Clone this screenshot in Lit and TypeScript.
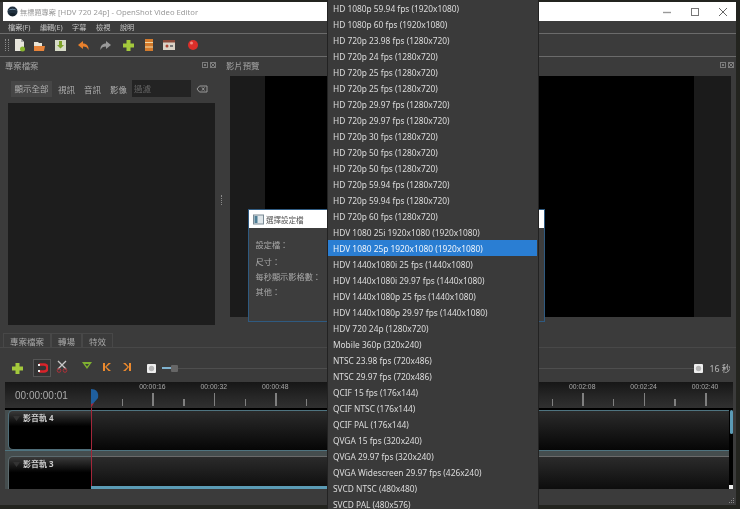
import { LitElement, html, css, svg } from 'lit';
import { customElement } from 'lit/decorators.js';

const profiles = [
  'HD 1080p 59.94 fps (1920x1080)', 'HD 1080p 60 fps (1920x1080)', 'HD 720p 23.98 fps (1280x720)',
  'HD 720p 24 fps (1280x720)', 'HD 720p 25 fps (1280x720)', 'HD 720p 25 fps (1280x720)',
  'HD 720p 29.97 fps (1280x720)', 'HD 720p 29.97 fps (1280x720)', 'HD 720p 30 fps (1280x720)',
  'HD 720p 50 fps (1280x720)', 'HD 720p 50 fps (1280x720)', 'HD 720p 59.94 fps (1280x720)',
  'HD 720p 59.94 fps (1280x720)', 'HD 720p 60 fps (1280x720)', 'HDV 1080 25i 1920x1080 (1920x1080)',
  'HDV 1080 25p 1920x1080 (1920x1080)', 'HDV 1440x1080i 25 fps (1440x1080)', 'HDV 1440x1080i 29.97 fps (1440x1080)',
  'HDV 1440x1080p 25 fps (1440x1080)', 'HDV 1440x1080p 29.97 fps (1440x1080)', 'HDV 720 24p (1280x720)',
  'Mobile 360p (320x240)', 'NTSC 23.98 fps (720x486)', 'NTSC 29.97 fps (720x486)', 'QCIF 15 fps (176x144)',
  'QCIF NTSC (176x144)', 'QCIF PAL (176x144)', 'QVGA 15 fps (320x240)', 'QVGA 29.97 fps (320x240)',
  'QVGA Widescreen 29.97 fps (426x240)', 'SVCD NTSC (480x480)', 'SVCD PAL (480x576)',
];
const SELECTED = 15;

const ico = (w: number, h: number, body: unknown) =>
  html`<svg width=${w} height=${h} viewBox="0 0 ${w} ${h}">${body}</svg>`;

const plus = ico(13, 13, svg`<path d="M4.500 1h4v3.500H12v4H8.500V12h-4V8.500H1v-4h3.500z" fill="#a4c93c"/>`);
const dockBtns = ico(16, 8, svg`<g fill="none" stroke="#7c7c7c" stroke-width="1"><rect x="1.500" y="1.500" width="5" height="5"/><path d="M3 3l2 2M5 3L3 5"/><rect x="9.500" y="1.500" width="5" height="5"/><path d="M10 2l4 4M14 2l-4 4"/></g>`);

const tick = (i: number) => {
  const left = 91 - 5 + i * 30.7;
  return html`<i class="tick ${i % 2 === 0 ? 'major' : ''}" style="left:${left}px"></i>`;
};
const stamp = (n: number) => {
  const s = n * 16;
  const mm = String(Math.floor(s / 60)).padStart(2, '0');
  const ss = String(s % 60).padStart(2, '0');
  return html`<span class="stamp" style="left:${91 - 5 + n * 61.4 - 20}px">00:${mm}:${ss}</span>`;
};

@customElement('app-root')
export class AppRoot extends LitElement {
  static styles = css`
    :host {
      display: block;
      width: 740px;
      height: 509px;
      position: relative;
      overflow: hidden;
      background: #23241f;
      font-family: "Noto Sans", "Noto Sans CJK TC", sans-serif;
      font-size: 9px;
      color: #bdbdbd;
    }
    .window, .dialog, .dropdown { filter: blur(0.25px); }
    .window {
      margin-top: 2px;
      width: 736px;
      height: 503px;
      background: #3b3b3b;
      display: flex;
      flex-direction: column;
    }
    .title {
      height: 19px;
      margin-left: 3px;
      background: #fff;
      display: flex;
      align-items: center;
      padding-left: 4px;
      color: #9a9a9a;
      font-size: 7.7px;
      gap: 2px;
      flex: none;
    }
    .title .caption { flex: 1; }
    .title .cjk { font-size: 7.2px; }
    .winbtns { display: flex; gap: 18px; padding-right: 8px; align-items: center; }
    .menubar {
      height: 12px;
      flex: none;
      display: flex;
      gap: 9.5px;
      padding-left: 8px;
      align-items: center;
      border-bottom: 1px solid #6b6b6b;
      font-size: 7.2px;
      line-height: 12px;
      color: #c4c4c4;
    }
    .toolbar {
      height: 22px;
      flex: none;
      display: flex;
      align-items: center;
      padding-left: 5px;
      border-bottom: 1px solid #6b6b6b;
    }
    .grip { width: 2px; height: 12px; border-left: 1px dotted #8a8a8a; border-right: 1px dotted #8a8a8a; }
    .toolbar svg { display: block; }
    .tb { width: 20.6px; display: flex; justify-content: center; flex: none; }
    .tb.gap3 { margin-left: 3px; }
    .docks { height: 272px; flex: none; display: flex; }
    .dock-left { width: 218px; flex: none; display: flex; flex-direction: column; padding-left: 6px; box-sizing: border-box; }
    .dock-head {
      height: 14px;
      margin-top: 1px;
      display: flex;
      align-items: center;
      justify-content: space-between;
      color: #a4a4a4;
      font-size: 8.4px;
      padding-right: 1px;
    }
    .dock-left .dock-head { margin-left: -1px; }
    .filter { display: flex; align-items: center; height: 17px; margin-top: 8px; padding-left: 5px; color: #b0b0b0; font-size: 8.5px; }
    .filter .all { width: 41px; height: 16px; line-height: 16px; text-align: center; background: #464646; margin-right: 6px; }
    .filter span { width: 17px; margin-right: 9px; flex: none; }
    .filter .input { width: 59px; height: 17px; line-height: 17px; background: #232323; color: #666; padding-left: 2px; box-sizing: border-box; margin: 0 5px 0 -4px; }
    .list { flex: 1; margin: 6px 3px 4px 2px; background: #1d1d1d; }
    .splitter { width: 8px; flex: none; display: flex; align-items: center; justify-content: center; }
    .splitter i { height: 10px; width: 1px; border-left: 1px dotted #8a8a8a; margin-top: 14px; }
    .dock-right { flex: 1; display: flex; flex-direction: column; min-width: 0; }
    .preview { margin: 4px 5px 0 4px; height: 241px; background: #1b1b1b; display: flex; justify-content: center; }
    .preview div { width: 429px; background: #000; margin-right: 2px; }
    .tabs { flex: none; margin-top: 4px; height: 14px; display: flex; padding-left: 3px; border-bottom: 1px solid #484848; color: #a8a8a8; }
    .tabs span { padding: 0 6px; line-height: 15px; border: 1px solid #484848; border-bottom: 0; height: 14px; font-size: 8.5px; }
    .tl-tools { flex: none; height: 26px; margin-top: 7px; display: flex; align-items: center; padding-left: 11px; }
    .tl-tools > * { flex: none; }
    .magnet { width: 18px; height: 18px; box-sizing: border-box; border: 1px solid #555; background: #333; display: flex; align-items: center; justify-content: center; margin: 0 5px 0 9px; }
    .t-cut { margin-right: 13px; }
    .t-down { margin-right: 9px; margin-top: -4px; }
    .t-prev { margin-right: 10px; }
    .t-next { margin-right: 15px; }
    .slider { display: flex; align-items: center; margin-left: 6px; width: 532px; }
    .slider b { display: block; width: 9px; height: 2px; background: #7fb2cf; }
    .slider i { display: block; width: 7px; height: 7px; background: #666; border-radius: 1px; }
    .slider u { display: block; flex: 1; height: 1px; background: #4e4e4e; }
    .zbox { width: 9px; height: 9px; background: radial-gradient(#b5b5b5 35%, #eee 50%); border-radius: 1px; display: block; }
    .secs { margin-left: 6.500px; font-size: 8.800px; color: #b8b8b8; }
    .timeline { flex: none; margin-left: 5px; margin-top: 1px; width: 728px; height: 107px; background: #000; position: relative; overflow: hidden; }
    .ruler { height: 26px; position: relative; background: linear-gradient(#161616, #262626 55%, #303030); }
    .clock { position: absolute; left: 10px; top: 8px; font: 10px "Liberation Sans", sans-serif; color: #aaa; }
    .stamp { position: absolute; top: 0; width: 40px; text-align: center; font: 6.8px "Liberation Sans", sans-serif; line-height: 9px; color: #aaa; }
    .tick { position: absolute; bottom: 2px; width: 1.5px; height: 7px; background: #808080; }
    .tick.major { height: 13px; }
    .tracks { margin: 2px 4px 0 0; background: #454d4e; }
    .track { height: 40px; display: flex; }
    .gap { height: 6px; box-sizing: border-box; border-top: 1px solid #4f7480; }
    .head { width: 83px; margin-left: 3px; flex: none; box-sizing: border-box; border: 1px solid #4f6d78; border-right: 0; border-radius: 5px 0 0 5px; background: linear-gradient(#3a3a3a, #000 40%); color: #ccc; padding-left: 4px; font-size: 8px; font-weight: 700; line-height: 14px; display: flex; gap: 3px; align-items: flex-start; }
    .head svg { margin-top: 5px; }
    .lane { flex: 1; border-top: 1px solid #4f7480; background: linear-gradient(#2b2b2b, #060606); }
    .second .lane { border-top-color: #6a6a6a; }
    .second .head { border-bottom: 0; border-radius: 5px 0 0 0; border-color: #5c6a6e; }
    .vthumb { position: absolute; right: 0; top: 28px; width: 3px; height: 24px; background: #5b9bb5; border-radius: 2px; }
    .corner { position: absolute; right: 0; bottom: 0; width: 4px; height: 4px; background: #eee; }
    .hthumb { position: absolute; left: 86px; bottom: 0; width: 320px; height: 3px; background: #5b9bb5; }
    .playline { position: absolute; left: 86px; top: 26px; bottom: 0; width: 1px; background: #a3273a; }
    .playhead { position: absolute; left: 86px; top: 7px; display: block; }
    .status { flex: 1; position: relative; }
    .resize { position: absolute; right: 1px; bottom: 1px; display: block; }

    .dialog {
      position: absolute;
      left: 248px;
      top: 209px;
      width: 297px;
      height: 113px;
      box-sizing: border-box;
      border: 1px solid #2f5a80;
      background: #3d3d3d;
    }
    .dlg-title { height: 18px; background: #fff; display: flex; align-items: center; gap: 2px; padding-left: 4px; color: #555; font-size: 7.5px; }
    .dlg-body { display: grid; grid-template-rows: 16px 17px 14px 15px; padding: 8px 0 0 6.500px; color: #aaa; font-size: 8.2px; align-items: center; }

    .dropdown {
      position: absolute;
      left: 328px;
      top: 0;
      width: 210px;
      height: 509px;
      overflow: hidden;
      background: #3a3a3a;
      box-shadow: 1px 0 0 #222, -1px 0 0 #222;
    }
    .row { height: 16px; line-height: 18px; padding-left: 5px; font-size: 8.350px; color: #dcdcdc; white-space: nowrap; }
    .row.sel { background: #2a7ed3; color: #eef4fb; margin-right: 1px; }
  `;

  render() {
    const ticks = Array.from({ length: 21 }, (_, i) => i + 1);
    // stamps 4 to 7 sit behind the open dropdown
    const stamps = [1, 2, 3, 8, 9, 10];
    const tri = ico(7, 5, svg`<path d="M0 0h7L3.500 5z" fill="#333"/>`);
    return html`
      <div class="window">
        <div class="title">
          ${ico(11, 11, svg`<circle cx="5.500" cy="5.500" r="5" fill="#20303f"/><path d="M1 5a5 4 0 0 1 9 0a5 2.500 0 0 0-9 0z" fill="#8fb6d2"/><path d="M2 8q3-2 7 0l-2 2H4z" fill="#15202a"/>`)}
          <span class="caption"><span class="cjk">無標題專案</span> [HDV 720 24p] - OpenShot Video Editor</span>
          <div class="winbtns">
            ${ico(10, 10, svg`<path d="M1 5.500h8" stroke="#999" stroke-width="1.400"/>`)}
            ${ico(10, 10, svg`<rect x="1.500" y="1.500" width="7" height="7" fill="none" stroke="#777"/>`)}
            ${ico(10, 10, svg`<path d="M1 1l8 8M9 1L1 9" stroke="#666" fill="none"/>`)}
          </div>
        </div>

        <div class="menubar"><span>檔案(F)</span><span>編輯(E)</span><span>字幕</span><span>檢視</span><span>說明</span></div>

        <div class="toolbar">
          <i class="grip"></i>
          <div class="tb">${ico(12, 14, svg`<path d="M2 1h6l3 3v9H2z" fill="#e8e6dc"/><path d="M8 1v3h3" fill="#aaa"/><circle cx="9.500" cy="11" r="2.500" fill="#8ab82e"/>`)}</div>
          <div class="tb">${ico(13, 13, svg`<path d="M1 3h4l1 1h3v8H1z" fill="#e9e4d6"/><path d="M1 7h11l-1 5H1z" fill="#e8843a"/>`)}</div>
          <div class="tb">${ico(13, 13, svg`<rect x="1" y="1" width="11" height="11" fill="#d8dcc8"/><path d="M5 2h3v4h2L6.500 9.500 3 6h2z" fill="#7fa32a"/>`)}</div>
          <div class="tb gap3">${ico(14, 13, svg`<path d="M6 2L1 6l5 4V7.500c3 0 4.500 1 5.500 3.500c.5-4-2-6.500-5.500-6.500z" fill="#e8802c"/>`)}</div>
          <div class="tb">${ico(14, 13, svg`<path d="M8 2l5 4-5 4V7.500C5 7.500 3.500 8.500 2.500 11C2 7 4.500 4.500 8 4.500z" fill="#9a9a9a"/>`)}</div>
          <div class="tb gap3">${plus}</div>
          <div class="tb">${ico(10, 14, svg`<rect x="1" y="1" width="8" height="12" fill="#d27a2c"/><path d="M1 4.500h8M1 9h8" stroke="#f1d9a8" stroke-width="1.200"/>`)}</div>
          <div class="tb">${ico(14, 12, svg`<rect x="1" y="1" width="12" height="10" fill="#d9d2c6"/><rect x="1" y="1" width="12" height="2.500" fill="#8a4a3a"/><circle cx="5" cy="7" r="1.500" fill="#a43"/><rect x="8" y="6" width="3" height="2" fill="#777"/>`)}</div>
          <div class="tb gap3">${ico(12, 12, svg`<circle cx="6" cy="6" r="5" fill="#dc2f2a"/><circle cx="4.500" cy="4" r="1.500" fill="#f08a80"/>`)}</div>
        </div>

        <div class="docks">
          <div class="dock-left">
            <div class="dock-head"><span>專案檔案</span>${dockBtns}</div>
            <div class="filter">
              <div class="all">顯示全部</div>
              <span>視訊</span><span>音訊</span><span>影像</span>
              <div class="input">過濾</div>
              ${ico(12, 8, svg`<path d="M3.500 1H11v6H3.500L1 4z" fill="none" stroke="#9a9a9a"/><path d="M6 2.500l2.500 3M8.500 2.500L6 5.500" stroke="#9a9a9a" fill="none"/>`)}
            </div>
            <div class="list"></div>
          </div>
          <div class="splitter"><i></i></div>
          <div class="dock-right">
            <div class="dock-head"><span>影片預覽</span>${dockBtns}</div>
            <div class="preview"><div></div></div>
          </div>
        </div>

        <div class="tabs"><span>專案檔案</span><span>轉場</span><span>特效</span></div>

        <div class="tl-tools">
          ${plus}
          <div class="magnet">${ico(11, 10, svg`<path d="M2 1.500h5a3.500 3.500 0 0 1 0 7H2" fill="none" stroke="#d8232a" stroke-width="2.600"/><path d="M1 1v2h2V1zM1 7v2h2V7z" fill="#eee"/>`)}</div>
          <div class="t-cut">${ico(12, 13, svg`<path d="M2 1l8 8M10 1L2 9" stroke="#c9c9c9" stroke-width="1.300"/><circle cx="3" cy="10.500" r="1.800" fill="none" stroke="#b03038"/><circle cx="9" cy="10.500" r="1.800" fill="none" stroke="#b03038"/>`)}</div>
          <div class="t-down">${ico(12, 9, svg`<path d="M1 1h10L6 8z" fill="#7fb030"/><path d="M4 3h4L6 5.500z" fill="#3b3b3b"/>`)}</div>
          <div class="t-prev">${ico(10, 10, svg`<path d="M1 1h2v8H1zM9 1L4.500 5 9 9H6.500L3 5l3.500-4z" fill="#ec8a2e"/>`)}</div>
          <div class="t-next">${ico(10, 10, svg`<path d="M7 1h2v8H7zM1 1l4.500 4L1 9h2.500L7 5 3.500 1z" fill="#ec8a2e"/>`)}</div>
          <i class="zbox"></i>
          <div class="slider"><b></b><i></i><u></u></div>
          <i class="zbox"></i>
          <span class="secs">16 秒</span>
        </div>

        <div class="timeline">
          <div class="ruler">
            <span class="clock">00:00:00:01</span>
            ${stamps.map(stamp)}
            ${ticks.map(tick)}
          </div>
          <div class="tracks">
            <div class="track"><div class="head">${tri}影音軌 4</div><div class="lane"></div></div>
            <div class="gap"></div>
            <div class="track second"><div class="head">${tri}影音軌 3</div><div class="lane"></div></div>
          </div>
          <i class="playline"></i>
          <svg class="playhead" width="8" height="20" viewBox="0 0 8 20"><path d="M0 0c5 0 8 3 7 9L0 17z" fill="#1f5f9e"/><path d="M0 15l3-1-3 5z" fill="#a3273a"/></svg>
          <i class="hthumb"></i>
          <i class="vthumb"></i>
          <i class="corner"></i>
        </div>

        <div class="status">
          <svg class="resize" width="7" height="7" viewBox="0 0 7 7"><path d="M5 1h1v1H5zM3 3h1v1H3zM5 3h1v1H5zM1 5h1v1H1zM3 5h1v1H3zM5 5h1v1H5z" fill="#888"/></svg>
        </div>
      </div>

      <div class="dialog">
        <div class="dlg-title">
          ${ico(11, 11, svg`<rect x="0.500" y="1" width="10" height="9" fill="#dfe6ea" stroke="#7a8a94"/><rect x="1.500" y="2" width="3" height="7" fill="#4f7f96"/>`)}
          <span>選擇設定檔</span>
        </div>
        <div class="dlg-body"><div>設定檔：</div><div>尺寸：</div><div>每秒顯示影格數：</div><div>其他：</div></div>
      </div>

      <div class="dropdown">
        ${profiles.map((p, i) => html`<div class="row ${i === SELECTED ? 'sel' : ''}">${p}</div>`)}
      </div>
    `;
  }
}
